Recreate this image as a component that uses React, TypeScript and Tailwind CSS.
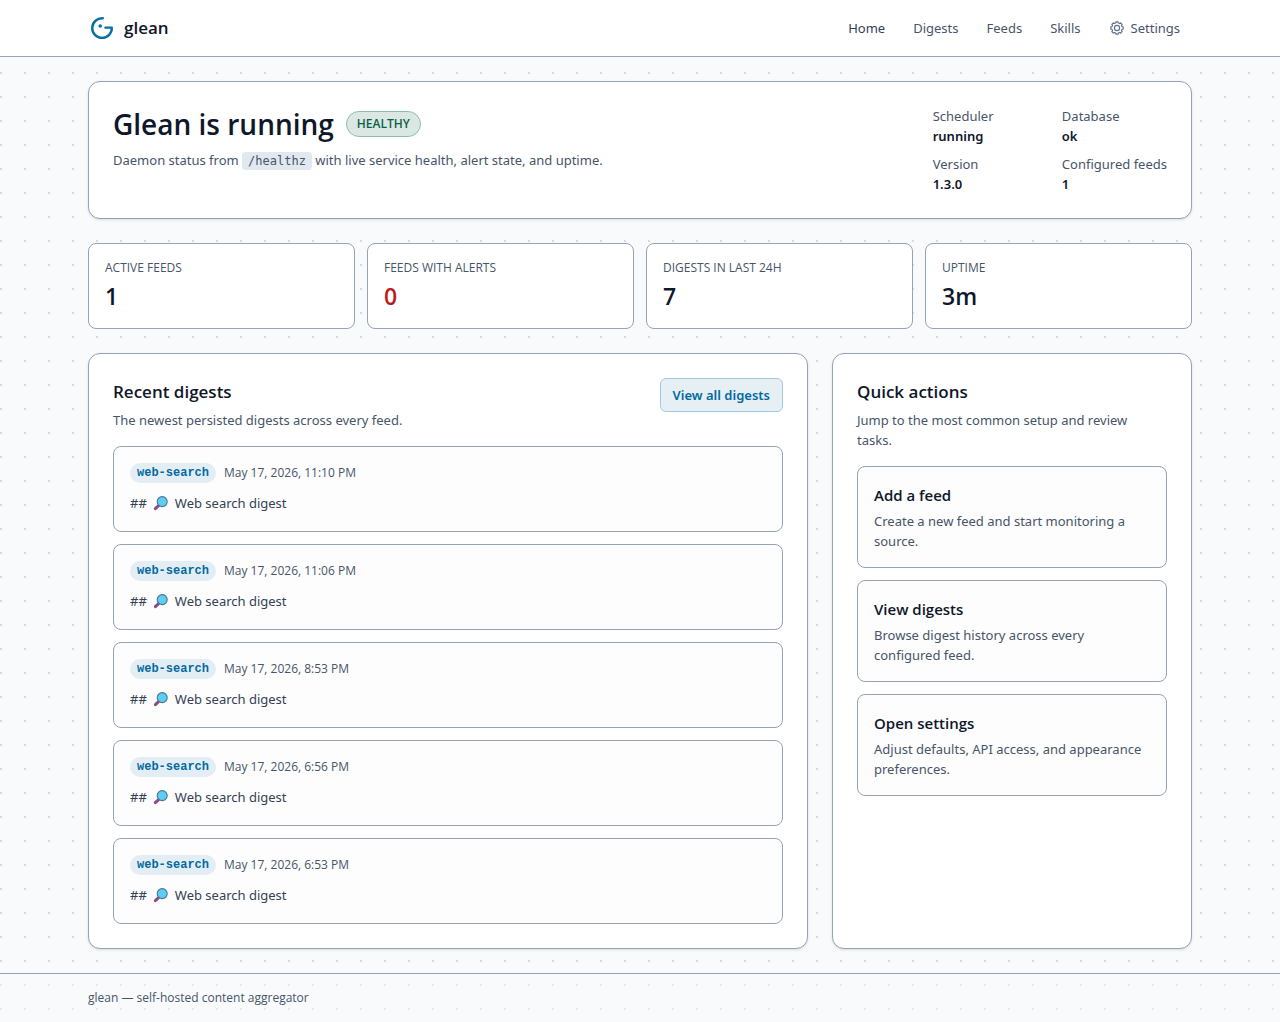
import type { ReactNode } from "react";

const digests = [
  "May 17, 2026, 11:10 PM",
  "May 17, 2026, 11:06 PM",
  "May 17, 2026, 8:53 PM",
  "May 17, 2026, 6:56 PM",
  "May 17, 2026, 6:53 PM",
];

const stats = [
  { label: "ACTIVE FEEDS", value: "1", tone: "text-[#0f172a]" },
  { label: "FEEDS WITH ALERTS", value: "0", tone: "text-[#b91c1c]" },
  { label: "DIGESTS IN LAST 24H", value: "7", tone: "text-[#0f172a]" },
  { label: "UPTIME", value: "3m", tone: "text-[#0f172a]" },
];

const actions = [
  { title: "Add a feed", text: "Create a new feed and start monitoring a source." },
  { title: "View digests", text: "Browse digest history across every configured feed." },
  { title: "Open settings", text: "Adjust defaults, API access, and appearance preferences." },
];

const status = [
  ["Scheduler", "running"],
  ["Database", "ok"],
  ["Version", "1.3.0"],
  ["Configured feeds", "1"],
];

function Logo() {
  return (
    <svg viewBox="0 0 28 28" className="size-7" fill="none" aria-hidden="true">
      <path
        d="M14.8 4.3A9.8 9.8 0 1 0 23.8 13.6H17.4"
        stroke="#0770a6"
        strokeWidth="2.4"
        strokeLinecap="round"
        strokeLinejoin="round"
      />
      <circle cx="12.2" cy="12" r="1.8" fill="#0770a6" />
    </svg>
  );
}

// Outline of an eight-toothed wheel centred in a 16-unit box.
const gearOutline =
  "M" +
  Array.from({ length: 8 }, (_, i) =>
    [
      [-14, 5.2],
      [-10, 6.3],
      [10, 6.3],
      [14, 5.2],
    ]
      .map(([offset, radius]) => {
        const angle = ((i * 45 + offset) * Math.PI) / 180;
        return `${(8 + radius * Math.cos(angle)).toFixed(2)} ${(8 + radius * Math.sin(angle)).toFixed(2)}`;
      })
      .join("L"),
  ).join("L") +
  "Z";

function Gear() {
  return (
    <svg
      viewBox="0 0 16 16"
      className="size-4 text-[#64748b]"
      fill="none"
      stroke="currentColor"
      strokeWidth="1.2"
      strokeLinejoin="round"
      aria-hidden="true"
    >
      <path d={gearOutline} />
      <circle cx="8" cy="8" r="2.6" />
    </svg>
  );
}

function Magnifier() {
  return (
    <svg viewBox="0 0 16 16" className="size-4" fill="none" role="img" aria-label="Magnifying glass">
      <path d="M2.4 13.6 5.6 10.6" stroke="#8b4a8c" strokeWidth="3" strokeLinecap="round" />
      <circle cx="9.2" cy="6.6" r="5" fill="#5dcdf0" stroke="#4c7596" strokeWidth="1.1" />
    </svg>
  );
}

function NavLink({ children, active = false }: { children: ReactNode; active?: boolean }) {
  return (
    <a
      href="#"
      className={`flex items-center gap-1.5 rounded-md px-3 py-2 ${active ? "text-[#334155]" : "text-[#475569]"}`}
    >
      {children}
    </a>
  );
}

export default function App() {
  return (
    <div className="flex min-h-screen flex-col bg-[#f8fafc] bg-[radial-gradient(circle_at_1px_1px,#d5d9e2_1px,transparent_0)] bg-[size:24px_24px] font-['Noto_Sans',sans-serif] text-[13px] leading-5 text-[#475569]">
      <header className="border-b border-[#94a3b8] bg-white">
        <div className="mx-auto flex h-14 max-w-6xl items-center justify-between px-6">
          <a href="#" className="flex items-center gap-2 font-['Open_Sans',sans-serif] text-[17px] font-semibold text-[#0f172a]">
            <Logo />
            glean
          </a>
          <nav className="flex items-center gap-1">
            <NavLink active>Home</NavLink>
            <NavLink>Digests</NavLink>
            <NavLink>Feeds</NavLink>
            <NavLink>Skills</NavLink>
            <NavLink>
              <Gear />
              Settings
            </NavLink>
          </nav>
        </div>
      </header>

      <main className="mx-auto flex w-full max-w-6xl grow flex-col gap-6 p-6">
        <section className="flex items-start justify-between gap-6 rounded-xl border border-[#94a3b8] bg-white p-6 shadow-sm">
          <div>
            <div className="flex items-center gap-3 font-['Open_Sans',sans-serif]">
              <h1 className="text-[28px] leading-9 font-semibold text-[#0f172a]">Glean is running</h1>
              <span className="rounded-full border border-[#8fbfac] bg-[#dbe7e3] px-2.5 py-1 text-[12px] leading-4 font-semibold text-[#0b6148]">
                HEALTHY
              </span>
            </div>
            <p className="mt-2">
              Daemon status from{" "}
              <code className="rounded bg-[#e2e8f0] px-1.5 py-0.5 font-['DejaVu_Sans_Mono',monospace] text-[12px] leading-4">
                /healthz
              </code>{" "}
              with live service health, alert state, and uptime.
            </p>
          </div>
          <dl className="grid grid-cols-2 gap-x-6 gap-y-2">
            {status.map(([name, value]) => (
              <div key={name}>
                <dt>{name}</dt>
                <dd className="font-semibold text-[#0f172a]">{value}</dd>
              </div>
            ))}
          </dl>
        </section>

        <section className="grid grid-cols-4 gap-3 font-['Open_Sans',sans-serif]">
          {stats.map((s) => (
            <div key={s.label} className="rounded-lg border border-[#94a3b8] bg-white p-4">
              <p className="text-[12px] leading-4">{s.label}</p>
              <p className={`mt-1 text-[23px] leading-8 font-semibold ${s.tone}`}>{s.value}</p>
            </div>
          ))}
        </section>

        <div className="grid grid-cols-[2fr_1fr] gap-6">
          <section className="rounded-xl border border-[#94a3b8] bg-white p-6 shadow-sm">
            <div className="flex items-start justify-between">
              <div>
                <h2 className="font-['Open_Sans',sans-serif] text-[17px] leading-7 font-semibold text-[#0f172a]">Recent digests</h2>
                <p className="mt-1">The newest persisted digests across every feed.</p>
              </div>
              <a
                href="#"
                className="rounded-md border border-[#a3cbe0] bg-[#e5eff4] px-3 py-1.5 font-semibold text-[#0369a1]"
              >
                View all digests
              </a>
            </div>
            <ul className="mt-4 flex flex-col gap-3">
              {digests.map((date) => (
                <li key={date} className="rounded-lg border border-[#94a3b8] bg-[#fdfdfd] p-4">
                  <div className="flex items-center gap-2 text-[12px]">
                    <span className="rounded-full bg-[#e3eef4] px-[7px] font-['Liberation_Mono',monospace] font-semibold text-[#0369a1]">
                      web-search
                    </span>
                    <time className="font-['Open_Sans',sans-serif]">{date}</time>
                  </div>
                  <p className="mt-2 flex items-center gap-1.5 leading-6 text-[#334155]">
                    <span>##</span>
                    <Magnifier />
                    <span>Web search digest</span>
                  </p>
                </li>
              ))}
            </ul>
          </section>

          <section className="rounded-xl border border-[#94a3b8] bg-white p-6 shadow-sm">
            <h2 className="font-['Open_Sans',sans-serif] text-[17px] leading-7 font-semibold text-[#0f172a]">Quick actions</h2>
            <p className="mt-1 pr-4">Jump to the most common setup and review tasks.</p>
            <div className="mt-4 flex flex-col gap-3">
              {actions.map((a) => (
                <a key={a.title} href="#" className="rounded-lg border border-[#94a3b8] bg-[#fdfdfd] p-4">
                  <h3 className="font-['Open_Sans',sans-serif] text-[15px] leading-6 font-semibold text-[#0f172a]">{a.title}</h3>
                  <p className="mt-1">{a.text}</p>
                </a>
              ))}
            </div>
          </section>
        </div>
      </main>

      <footer className="border-t border-[#94a3b8] bg-[#f8fafc]/50">
        <div className="mx-auto max-w-6xl px-6 py-4 font-['Open_Sans',sans-serif] text-[12px] leading-4">
          glean — self-hosted content aggregator
        </div>
      </footer>
    </div>
  );
}
